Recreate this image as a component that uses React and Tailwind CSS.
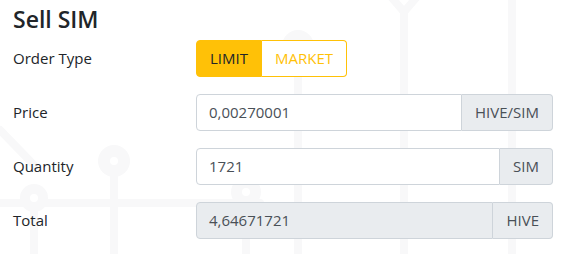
import React from 'react'

function CircuitBackground() {
  return (
    <svg className="absolute inset-0 w-full h-full pointer-events-none" viewBox="0 0 577 254" fill="none">
      <g stroke="#f8f8f9" strokeWidth="8" strokeLinecap="round">
        <line x1="0" y1="130" x2="34" y2="165" />
        <line x1="0" y1="203" x2="260" y2="203" />
        <line x1="34" y1="200" x2="34" y2="260" />
        <line x1="114" y1="176" x2="114" y2="260" />
        <line x1="298" y1="62" x2="298" y2="260" />
        <line x1="246" y1="205" x2="246" y2="260" />
        <line x1="404" y1="12" x2="404" y2="260" />
        <line x1="404" y1="12" x2="392" y2="-2" />
        <line x1="404" y1="12" x2="416" y2="-2" />
        <line x1="512" y1="-2" x2="512" y2="260" />
      </g>
      <g fill="#f8f8f9">
        <circle cx="114" cy="161" r="16" />
        <circle cx="34" cy="198" r="14" />
        <circle cx="298" cy="46" r="16" />
        <circle cx="246" cy="192" r="15" />
      </g>
      <g fill="#ffffff">
        <circle cx="114" cy="161" r="4" />
        <circle cx="34" cy="198" r="4" />
        <circle cx="298" cy="46" r="4" />
        <circle cx="246" cy="192" r="4" />
      </g>
    </svg>
  )
}

function Row({ label, children }) {
  return (
    <div className="grid grid-cols-[183px_357px] items-center h-[37px]">
      <span className="text-[15px] text-[#212529]">{label}</span>
      {children}
    </div>
  )
}

function AmountInput({ value, unit, disabled }) {
  return (
    <div className="flex h-[37px] w-full">
      <div
        className={`flex-1 flex items-center px-3 text-[15px] text-[#495057] border border-[#ced4da] rounded-l ${
          disabled ? 'bg-[#e9ecef]' : 'bg-white'
        }`}
      >
        {value}
      </div>
      <div className="flex items-center px-[13px] text-[15px] text-[#495057] bg-[#e9ecef] border border-l-0 border-[#ced4da] rounded-r">
        {unit}
      </div>
    </div>
  )
}

export default function App() {
  return (
    <div
      className="relative w-[577px] h-[254px] bg-white overflow-hidden"
      style={{ fontFamily: '"Open Sans", "Noto Sans", sans-serif' }}
    >
      <CircuitBackground />
      <div className="relative pl-[13px] pt-[4px] flex flex-col">
        <h2 className="text-[23px] font-semibold text-[#212529] leading-[30px] mb-[6px]">Sell SIM</h2>

        <div className="flex flex-col gap-[17px]">
          <Row label="Order Type">
            <div className="flex h-[37px]">
              <button className="px-[13px] text-[15px] text-[#212529] bg-[#ffc107] border border-[#ffc107] rounded-l">
                LIMIT
              </button>
              <button className="px-[13px] text-[15px] text-[#ffc107] bg-white border border-l-0 border-[#ffc107] rounded-r">
                MARKET
              </button>
            </div>
          </Row>

          <Row label="Price">
            <AmountInput value="0,00270001" unit="HIVE/SIM" />
          </Row>

          <Row label="Quantity">
            <AmountInput value="1721" unit="SIM" />
          </Row>

          <Row label="Total">
            <AmountInput value="4,64671721" unit="HIVE" disabled />
          </Row>
        </div>
      </div>
    </div>
  )
}
